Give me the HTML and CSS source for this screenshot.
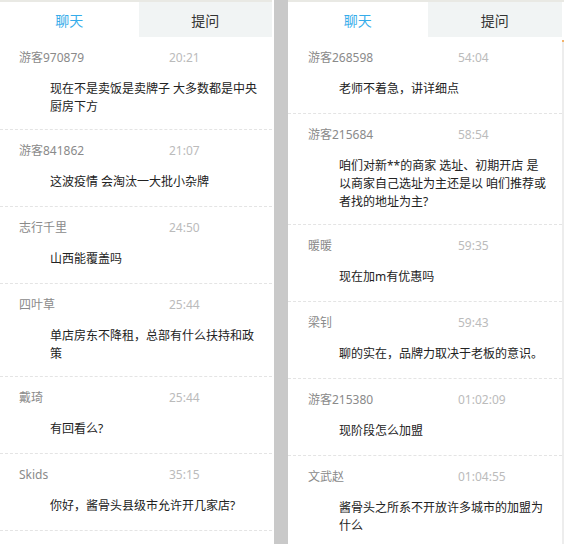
FILE: index.html
```html
<!DOCTYPE html>
<html lang="zh">
<head>
<meta charset="utf-8">
<title>聊天</title>
<link rel="stylesheet" href="styles.css">
</head>
<body>
<div class="page">
  <section class="panel panel-left">
    <div class="tabs"><div class="tab active">聊天</div><div class="tab">提问</div></div>
    <ul class="list">
      <li class="item"><div class="meta"><span class="name">游客970879</span><span class="time">20:21</span></div><p class="msg">现在不是卖饭是卖牌子 大多数都是中央厨房下方</p></li>
      <li class="item"><div class="meta"><span class="name">游客841862</span><span class="time">21:07</span></div><p class="msg">这波疫情 会淘汰一大批小杂牌</p></li>
      <li class="item"><div class="meta"><span class="name">志行千里</span><span class="time">24:50</span></div><p class="msg">山西能覆盖吗</p></li>
      <li class="item"><div class="meta"><span class="name">四叶草</span><span class="time">25:44</span></div><p class="msg">单店房东不降租，总部有什么扶持和政策</p></li>
      <li class="item"><div class="meta"><span class="name">戴琦</span><span class="time">25:44</span></div><p class="msg">有回看么?</p></li>
      <li class="item"><div class="meta"><span class="name">Skids</span><span class="time">35:15</span></div><p class="msg">你好，酱骨头县级市允许开几家店?</p></li>
    </ul>
  </section>
  <div class="divider"></div>
  <section class="panel panel-right">
    <div class="panel-body">
      <div class="tabs"><div class="tab active">聊天</div><div class="tab">提问</div></div>
      <ul class="list">
        <li class="item"><div class="meta"><span class="name">游客268598</span><span class="time">54:04</span></div><p class="msg">老师不着急，讲详细点</p></li>
        <li class="item"><div class="meta"><span class="name">游客215684</span><span class="time">58:54</span></div><p class="msg">咱们对新**的商家 选址、初期开店 是以商家自己选址为主还是以 咱们推荐或者找的地址为主?</p></li>
        <li class="item"><div class="meta"><span class="name">暖暖</span><span class="time">59:35</span></div><p class="msg">现在加m有优惠吗</p></li>
        <li class="item"><div class="meta"><span class="name">梁钊</span><span class="time">59:43</span></div><p class="msg">聊的实在，品牌力取决于老板的意识。</p></li>
        <li class="item"><div class="meta"><span class="name">游客215380</span><span class="time">01:02:09</span></div><p class="msg">现阶段怎么加盟</p></li>
        <li class="item"><div class="meta"><span class="name">文武赵</span><span class="time">01:04:55</span></div><p class="msg">酱骨头之所系不开放许多城市的加盟为什么</p></li>
      </ul>
    </div>
    <div class="scrollbar"></div>
  </section>
</div>
</body>
</html>
```
FILE: styles.css
```css
html, body {
  margin: 0;
  padding: 0;
  background: #fff;
}

.page {
  display: flex;
  width: 564px;
  height: 544px;
  overflow: hidden;
  font-family: "Noto Sans", "Noto Sans CJK SC", sans-serif;
}

.panel {
  border-top: 2px solid #e9e9e4;
  overflow: hidden;
}

.panel-left {
  width: 272px;
  margin-right: 2px;
}

.divider {
  width: 14px;
  background: #c9c9c9;
}

.panel-right {
  flex: 1;
  display: flex;
}

.panel-body {
  flex: 1;
  min-width: 0;
}

.scrollbar {
  width: 2px;
  margin-top: 38px;
  background: #ededed;
  border-top: 2px solid #f3b36a;
}

.tabs {
  display: grid;
  grid-template-columns: 51% 49%;
  height: 35px;
}

.tab {
  display: flex;
  align-items: center;
  justify-content: center;
  font-size: 14px;
  color: #333;
  background: #f1f4f4;
}

.tab.active {
  background: #fff;
  color: #36acea;
}

.list {
  list-style: none;
  margin: 0;
  padding: 0;
}

.item {
  padding: 12px 0 13px 19px;
  border-bottom: 1px dashed #e4e4e4;
}

.panel-right .item {
  padding-left: 20px;
}

.meta {
  display: flex;
  height: 18px;
  line-height: 18px;
  font-size: 12px;
}

.name {
  width: 150px;
  color: #8a8a8a;
}

.time {
  color: #bbb;
}

.msg {
  margin: 13px 0 0 31px;
  width: 209px;
  min-height: 20px;
  font-size: 12px;
  line-height: 18px;
  color: #222;
}
```
